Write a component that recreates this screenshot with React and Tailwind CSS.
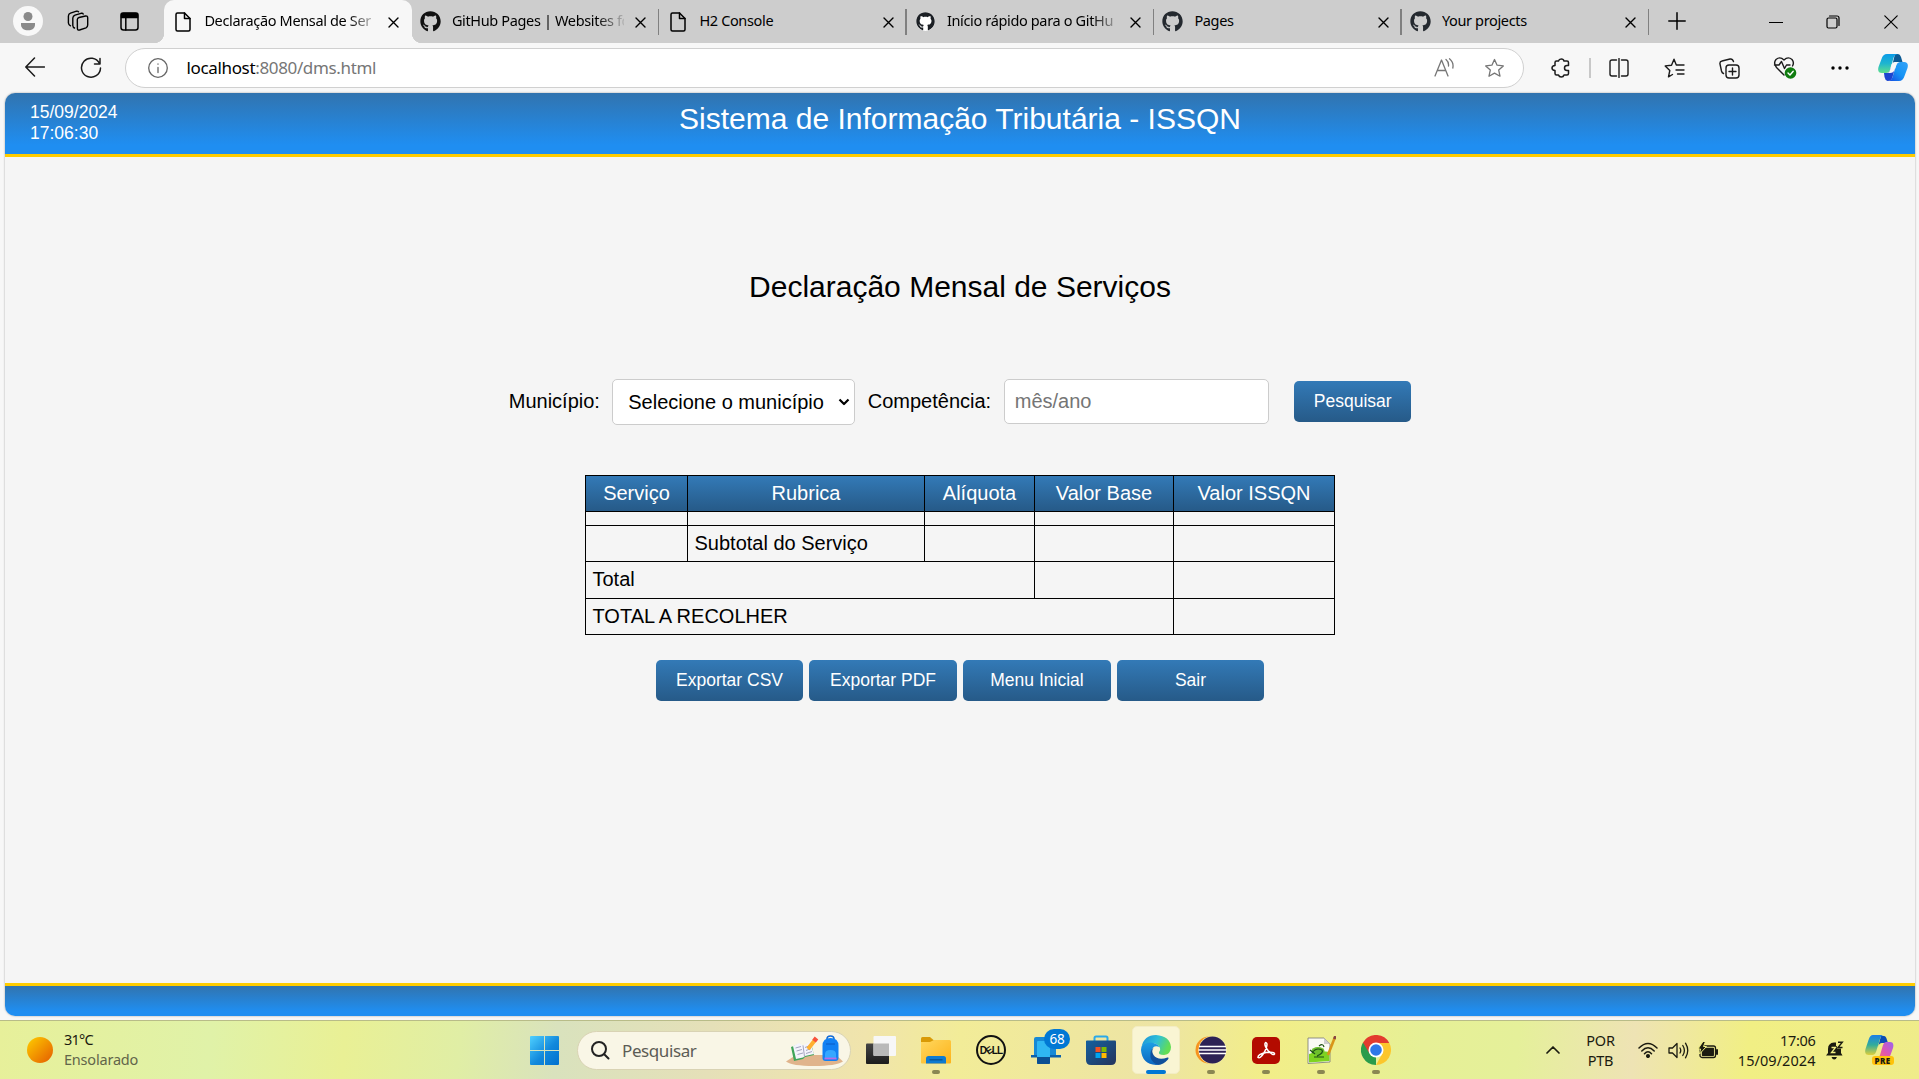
import React from "react";
import { FaGithub } from "react-icons/fa";

const ui = "font-['Noto_Sans','Open_Sans',sans-serif]";

function Svg({ s = 20, w, h, vb, sw = 1.3, className = "", children }) {
  return (
    <svg
      width={w || s}
      height={h || s}
      viewBox={vb || `0 0 ${w || s} ${h || s}`}
      fill="none"
      stroke="currentColor"
      strokeWidth={sw}
      strokeLinecap="round"
      strokeLinejoin="round"
      className={"shrink-0 " + className}
    >
      {children}
    </svg>
  );
}

const DocIcon = () => (
  <Svg w={16} h={20} sw={1.5}>
    <path d="M2.5 1H9.5L15 6.5V17.5Q15 19 13.5 19H2.5Q1 19 1 17.5V2.500Q1 1 2.500 1Z" />
    <path d="M9.500 1V6.500H15" />
  </Svg>
);

const CloseIcon = () => (
  <Svg s={11} sw={1.4}>
    <path d="M1 1L10 10M10 1L1 10" />
  </Svg>
);

function Tab({ icon, title, active, dark = "text-[#24292f]", sep, fade }) {
  return (
    <div
      className={
        "relative flex h-[43px] w-[247.5px] shrink-0 items-center " +
        (active ? "rounded-t-[10px] bg-[#f7f7f7]" : "")
      }
    >
      <div className="ml-2 flex w-[21px] justify-center">
        {icon === "doc" ? (
          <DocIcon />
        ) : icon === "inverse" ? (
          <span className="flex size-[19px] items-center justify-center rounded-full bg-white text-[#1b1f24]">
            <FaGithub size={19} />
          </span>
        ) : (
          <FaGithub size={21} className={dark} />
        )}
      </div>
      <div
        className={
          "ml-[11px] w-[172px] overflow-hidden pb-px text-[14.500px] tracking-[-0.350px] whitespace-nowrap text-black " +
          (fade ? "[mask-image:linear-gradient(to_right,black_84%,transparent_102%)]" : "")
        }
      >
        {title}
      </div>
      <div className="ml-[11.500px] pt-px">
        <CloseIcon />
      </div>
      {sep && <div className="absolute top-[9px] right-0 h-[26px] w-[1.500px] bg-[#808080]" />}
    </div>
  );
}

function TabStrip() {
  return (
    <div className="flex h-[43px] items-center bg-[#cdcdcd] text-black">
      <div className="flex w-14 justify-center pb-0.5">
        <svg width="30" height="30" viewBox="0 0 30 30">
          <circle cx="15" cy="15" r="15" fill="#f8f8f8" />
          <circle cx="15" cy="10.500" r="4.500" fill="#8a8a8a" />
          <path d="M8 17h14v1.500c0 4-3 5.800-7 5.800s-7-1.800-7-5.800z" fill="#8a8a8a" />
        </svg>
      </div>
      <div className="flex w-[44px] justify-center pb-px">
        <Svg s={22} sw={1.4}>
          <path d="M10.300 9.500Q10.500 8 12 7.500L18.500 6Q20.800 5.700 20.700 8V15Q20.700 17 19 17.800L12.500 20Q10.500 20.500 10.400 18.500Z" />
          <path d="M7.500 18Q6 17.500 5.800 15.500V8Q6 6 8 5.200L14 3.300Q15.800 3 16.200 4" />
          <path d="M3.500 15.800Q1.600 15 1.400 13V6Q1.500 4 3.500 3.200L9.500 1.200Q11 1 11.600 1.800" />
        </Svg>
      </div>
      <div className="flex w-[60px] justify-center pb-px">
        <Svg s={19} sw={1.5}>
          <rect x="1" y="1" width="17" height="17" rx="2.500" />
          <path d="M1.500 1.500h16v4h-16z" fill="currentColor" />
          <path d="M5.800 5v13" />
        </Svg>
      </div>
      <div className="relative ml-[5px] flex">
        <div className="absolute bottom-0 -left-[10px] size-[10px] bg-[radial-gradient(circle_at_0_0,transparent_10px,#f7f7f7_10.500px)]" />
        <div className="absolute bottom-0 left-[247.500px] size-[10px] bg-[radial-gradient(circle_at_100%_0,transparent_10px,#f7f7f7_10.500px)]" />
        <Tab icon="doc" title="Declaração Mensal de Ser" active fade />
        <Tab icon="gh" title="GitHub Pages | Websites fo" dark="text-[#111]" sep fade />
        <Tab icon="doc" title="H2 Console" sep />
        <Tab icon="inverse" title="Início rápido para o GitHu" sep fade />
        <Tab icon="gh" title="Pages" sep />
        <Tab icon="gh" title="Your projects" sep />
      </div>
      <div className="flex w-[55px] justify-center pb-px">
        <Svg s={18} sw={1.5}>
          <path d="M9 .8V17.200M.8 9H17.200" />
        </Svg>
      </div>
      <div className="ml-[42.500px] flex w-[58px] justify-center">
        <Svg s={14} sw={1.2}>
          <path d="M.5 7.500H13.500" />
        </Svg>
      </div>
      <div className="flex w-[58px] justify-center">
        <Svg s={14} sw={1.2}>
          <rect x="1" y="3" width="10" height="10" rx="1.500" />
          <path d="M3.500 1H11Q13 1 13 3V10.500" />
        </Svg>
      </div>
      <div className="flex w-[57px] justify-center">
        <Svg s={14} sw={1.2}>
          <path d="M.8.8L13.200 13.200M13.200.8L.8 13.200" />
        </Svg>
      </div>
    </div>
  );
}

const STAR = "M10.500 1.500L13.100 7.200L19.300 7.900L14.700 12.100L16 18.200L10.500 15.100L5 18.200L6.300 12.100L1.700 7.900L7.900 7.200Z";

function ToolCell({ children }) {
  return <div className="flex w-[55px] shrink-0 justify-center">{children}</div>;
}

function Toolbar() {
  return (
    <div className="flex h-[50px] items-center bg-[#f7f7f7] text-[#1b1b1b]">
      <div className="flex w-[70px] justify-center pb-0.5">
        <Svg s={20} sw={1.5}>
          <path d="M19.500 10H1M9.500 1L.8 10L9.500 19" />
        </Svg>
      </div>
      <div className="flex w-[41px] justify-center pb-px">
        <Svg s={22} sw={1.5}>
          <path d="M19.500 6.500A9.500 9.500 0 1 0 20.500 11M20 1.500V7H14.500" />
        </Svg>
      </div>
      <div className="ml-[14px] flex h-10 w-[1399px] items-center rounded-full border border-[#d0d0d0] bg-white">
        <Svg s={20} sw={1.3} className="ml-[21.500px] text-[#666]">
          <circle cx="10" cy="10" r="9.300" />
          <path d="M10 9.500V14.500M10 6V6.200" />
        </Svg>
        <div className="ml-[19px] flex-1 pb-px text-[17px] tracking-[-0.350px] text-[#767676]">
          <span className="text-black">localhost</span>:8080/dms.html
        </div>
        <div className="flex w-[50px] justify-center text-[#767676]">
          <Svg s={20} sw={1.3}>
            <path d="M1 18L7.500 2L14 18M3.300 12.500H11.700M12 1.500Q15 4 14.500 8M15.500.8Q20 4.500 18.800 10" />
          </Svg>
        </div>
        <div className="mr-[4px] flex w-[50px] justify-center text-[#767676]">
          <Svg s={21} sw={1.3}>
            <path d={STAR} />
          </Svg>
        </div>
      </div>
      <div className="ml-[9px] flex items-center">
        <ToolCell>
          <Svg s={20} sw={1.5}>
            <path d="M5.500 3H7.500Q8 1 10.300 1T13 3H16Q17.500 3 17.500 4.500V7.500H16Q13.500 7.500 13.500 10T16 12.500H17.500V15.500Q17.500 17 16 17H13Q12.500 19 10.300 19T7.500 17H5.500Q4 17 4 15.500V12.500Q1 12.300 1 10T4 7.500V4.500Q4 3 5.500 3Z" />
          </Svg>
        </ToolCell>
        <div className="-mr-px ml-px h-5 w-[1.500px] bg-[#c8c8c8]" />
        <div className="flex w-[59px] justify-center">
          <Svg s={20} sw={1.4}>
            <path d="M7.500 2H3Q1 2 1 4V16Q1 18 3 18H7.500M12.500 2H17Q19 2 19 4V16Q19 18 17 18H12.500M10 .5V19.500" />
          </Svg>
        </div>
        <div className="-ml-[1.500px] flex items-center">
          <ToolCell>
            <Svg s={21} sw={1.4}>
              <path d="M8.500 16.500L4.500 18.800L5.800 12.500L1.200 7.900L7.500 7.200L10 1.200L12.300 7H20M12 12H20M13.500 16H20" />
            </Svg>
          </ToolCell>
          <ToolCell>
            <Svg s={21} sw={1.4}>
              <rect x="7" y="7" width="13" height="13" rx="3" />
              <path d="M13.500 10V17M10 13.500H17M4.500 15.500Q3 15 2.500 13L1 6Q.5 3.500 3 3L11 1Q13.500.5 14.500 3.500" />
            </Svg>
          </ToolCell>
          <ToolCell>
            <Svg s={24} sw={1.4}>
              <path d="M11 19L3.500 11.500Q0 7 3 3.500Q7 0 11 4Q15 0 19 3.500Q21.500 6.500 19.500 10M1.500 9H6L8.500 5.500L11.500 12.500L13.500 9H17" />
              <circle cx="17.500" cy="17" r="5.800" fill="#107c10" stroke="none" />
              <path d="M15 17L17 19L20.200 15.200" stroke="#fff" />
            </Svg>
          </ToolCell>
          <ToolCell>
            <svg width="18" height="4" viewBox="0 0 18 4">
              <circle cx="2" cy="2" r="1.700" />
              <circle cx="9" cy="2" r="1.700" />
              <circle cx="16" cy="2" r="1.700" />
            </svg>
          </ToolCell>
          <div className="flex w-[51px] justify-center">
            <Copilot size={30} />
          </div>
        </div>
      </div>
    </div>
  );
}

function Copilot({ size }) {
  return (
    <svg width={size} height={size} viewBox="0 0 30 30" className="shrink-0">
      <defs>
        <linearGradient id="cpA" x1="0" y1="0" x2="0" y2="1">
          <stop offset="0" stopColor="#0a9be8" />
          <stop offset=".5" stopColor="#1fb5cf" />
          <stop offset="1" stopColor="#5fe08c" />
        </linearGradient>
        <linearGradient id="cpB" x1="0" y1="1" x2="1" y2="0">
          <stop offset="0" stopColor="#1546e0" />
          <stop offset=".5" stopColor="#1694f5" />
          <stop offset="1" stopColor="#34a3f8" />
        </linearGradient>
      </defs>
      <path d="M17 1H20Q22 1 23 4L24.500 9H18Q15 9 14 12L13 17Z" fill="#0c5a94" />
      <path d="M21 1H9Q5 1 3.500 6L.5 14Q-1 20 4 20H8Q11 20 12 17L15.500 5Q16.500 1 21 1Z" fill="url(#cpA)" />
      <path d="M9 28H21Q25 28 26.500 23L29.500 15Q31 9 26 9H22Q19 9 18 13L14.500 24Q13.500 28 9 28Z" fill="url(#cpB)" />
      <path d="M6 20H9Q11.500 20 12 17L13 14L17 15L14.500 24Q13.500 28 9.500 28Q7 27 6.500 24Z" fill="#1c45d0" />
      <path d="M13 13Q14 9 17.500 9H22Q19 9 18 13L16.500 17Q15.500 20 12 20H9Q11.500 20 12 17Z" fill="#f7f7f7" />
    </svg>
  );
}

function BlueButton({ children, className }) {
  return (
    <button
      className={
        "h-[41px] rounded-[5px] bg-linear-to-b from-[#337ab7] to-[#265a88] pb-px text-[17.500px] text-white " +
        className
      }
    >
      {children}
    </button>
  );
}

const th = "flex items-center justify-center bg-linear-to-b from-[#337ab7] to-[#265a88] pb-0.5 text-white";
const td = "flex items-center bg-[#f5f5f5] pb-0.5 pl-[6.500px]";

function Page() {
  return (
    <div className="h-[927px] bg-[#f7f7f7] pr-[4px] pl-[5px] font-['Liberation_Sans',Arial,sans-serif] text-[20px] text-black">
      <div className="flex h-[923px] flex-col overflow-hidden rounded-[10px] bg-[#f5f5f5] shadow-[0_0_2px_#999]">
        <header className="flex h-[64px] shrink-0 border-b-[3px] border-[#fc0] bg-[linear-gradient(to_bottom,#3174af,#1f8ef1_85%)] text-white">
          <div className="w-[400px] pt-[9px] pl-[25px] text-[17.500px] leading-[21px]">
            <div>15/09/2024</div>
            <div>17:06:30</div>
          </div>
          <h1 className="flex-1 pt-[8px] text-center text-[30px] leading-[35px]">
            Sistema de Informação Tributária - ISSQN
          </h1>
          <div className="w-[400px]" />
        </header>
        <main className="flex flex-1 flex-col items-center">
          <h2 className="mt-[112px] text-[30px] leading-[36px]">Declaração Mensal de Serviços</h2>
          <div className="mt-[74px] flex h-[46px] items-start">
            <label className="mt-[11px] w-[103.500px] leading-[23px]">Município:</label>
            <div className="flex h-[46px] w-[243px] items-center rounded-[5px] border border-[#ccc] bg-white pl-[15px] whitespace-nowrap">
              Selecione o município
              <Svg w={12} h={8} sw={2.200} className="ml-[14px]">
                <path d="M1.500 1.500L6 6L10.500 1.500" strokeLinecap="butt" />
              </Svg>
            </div>
            <label className="mt-[11px] ml-[12.500px] w-[136.500px] leading-[23px]">Competência:</label>
            <input
              className="h-[45px] w-[265px] rounded-[5px] border border-[#ccc] bg-white pl-[9.500px] placeholder:text-[#757575]"
              placeholder="mês/ano"
            />
            <BlueButton className="mt-0.5 ml-[25px] w-[117px]">Pesquisar</BlueButton>
          </div>
          <div className="mt-[50px] grid grid-cols-[101px_236px_109px_138px_160px] grid-rows-[35px_13px_35px_36px_35px] gap-px border border-black bg-black">
            <div className={th}>Serviço</div>
            <div className={th}>Rubrica</div>
            <div className={th}>Alíquota</div>
            <div className={th}>Valor Base</div>
            <div className={th}>Valor ISSQN</div>
            <div className={td} />
            <div className={td} />
            <div className={td} />
            <div className={td} />
            <div className={td} />
            <div className={td} />
            <div className={td}>Subtotal do Serviço</div>
            <div className={td} />
            <div className={td} />
            <div className={td} />
            <div className={td + " col-span-3"}>Total</div>
            <div className={td} />
            <div className={td} />
            <div className={td + " col-span-4"}>TOTAL A RECOLHER</div>
            <div className={td} />
          </div>
          <div className="mt-[25px] flex gap-[6px]">
            <BlueButton className="w-[147px]">Exportar CSV</BlueButton>
            <BlueButton className="w-[148px]">Exportar PDF</BlueButton>
            <BlueButton className="w-[148px]">Menu Inicial</BlueButton>
            <BlueButton className="w-[147px]">Sair</BlueButton>
          </div>
        </main>
        <footer className="h-[33px] shrink-0 border-t-[3px] border-[#fc0] bg-[linear-gradient(to_bottom,#3174af,#1f8ef1_85%)]" />
      </div>
    </div>
  );
}

function TaskApp({ children, dot, active }) {
  return (
    <div className="flex h-[58px] w-[55px] shrink-0 items-center justify-center">
      <div
        className={
          "relative flex size-12 items-center justify-center rounded-[5px] " +
          (active ? "border border-[#f3edc4] bg-[#f9f5d3]" : "")
        }
      >
        {children}
        {dot && <div className="absolute bottom-0 left-5 h-1 w-2 rounded-full bg-[#8a8752]" />}
        {active && <div className="absolute -bottom-px left-[13px] h-1 w-5 rounded-full bg-[#0078d4]" />}
      </div>
    </div>
  );
}

function TaskApps() {
  return (
    <div className="flex">
      <TaskApp>
        <svg width="30" height="28" viewBox="0 0 30 28">
          <defs>
            <linearGradient id="tv" x1="0" y1="0" x2="0" y2="1">
              <stop offset="0" stopColor="#444" />
              <stop offset="1" stopColor="#1c1c1c" />
            </linearGradient>
          </defs>
          <rect y="7.500" width="23" height="20.500" rx="1" fill="url(#tv)" />
          <rect x="7.500" width="22.500" height="20" rx="1" fill="#f7f7f7" />
          <path d="M7.500 7.500H23V20H8.500Q7.500 20 7.500 19Z" fill="#b9b9b9" />
        </svg>
      </TaskApp>
      <TaskApp dot>
        <svg width="30" height="27" viewBox="0 0 30 27">
          <defs>
            <linearGradient id="fo" x1="0" y1="0" x2="1" y2="1">
              <stop offset="0" stopColor="#ffd75e" />
              <stop offset="1" stopColor="#fdb31a" />
            </linearGradient>
          </defs>
          <path d="M0 1.500Q0 0 1.500 0H9L13 3.500V8H0Z" fill="#d99a06" />
          <path d="M0 5H9L13 3H28.500Q30 3 30 4.500V25.500Q30 26.500 29 26.500H1Q0 26.500 0 25.500Z" fill="url(#fo)" />
          <path d="M5 26.500V21.500Q5 19 7.500 19H22.500Q25 19 25 21.500V26.500Z" fill="#0f7bd0" />
          <path d="M8.500 22.800H21.500" stroke="#07508f" strokeWidth="1.200" />
        </svg>
      </TaskApp>
      <TaskApp>
        <div className="flex size-[30px] items-center justify-center rounded-full border-2 border-[#111] font-['Liberation_Sans',sans-serif] text-[10px] font-black tracking-[-0.900px] text-[#111]">
          D<span className="inline-block -rotate-[35deg]">E</span>LL
        </div>
      </TaskApp>
      <TaskApp>
        <svg width="30" height="30" viewBox="0 0 30 30">
          <path d="M3 4Q3 2 5 2H25V22H3Z" fill="#1689d6" />
          <path d="M0 20H30V22.500H0Z" fill="#0a60ac" />
          <rect x="6" y="6" width="13" height="23" rx="1" fill="#2fb6f2" />
          <path d="M6 22H19V28Q19 29 18 29H7Q6 29 6 28Z" fill="#0b4f93" />
        </svg>
        <div className="absolute top-[3px] left-[22px] flex h-5 w-[26px] items-center justify-center rounded-full bg-[#0078d4] text-[13.500px] tracking-[-0.300px] text-white">
          68
        </div>
      </TaskApp>
      <TaskApp>
        <svg width="30" height="30" viewBox="0 0 30 30">
          <defs>
            <linearGradient id="st" x1="0" y1="0" x2="1" y2="1">
              <stop offset="0" stopColor="#14609f" />
              <stop offset="1" stopColor="#25345c" />
            </linearGradient>
          </defs>
          <path d="M8.500 6V3Q8.500 1.500 10 1.500H20Q21.500 1.500 21.500 3V6" stroke="#2aa9ea" strokeWidth="2" fill="none" />
          <path d="M0 6Q0 5.500 1 5.500H29Q30 5.500 30 6.500V25Q30 30 25 30H5Q0 30 0 25Z" fill="url(#st)" />
          <path d="M9.500 12H14.500V17H9.500Z" fill="#f25022" />
          <path d="M15.500 12H20.500V17H15.500Z" fill="#7fba00" />
          <path d="M9.500 18H14.500V23H9.500Z" fill="#00a4ef" />
          <path d="M15.500 18H20.500V23H15.500Z" fill="#ffb900" />
        </svg>
      </TaskApp>
      <TaskApp active>
        <svg width="30" height="30" viewBox="0 0 30 30">
          <defs>
            <linearGradient id="e1" x1="0" y1="0" x2="1" y2=".35">
              <stop offset="0" stopColor="#1a8fd8" />
              <stop offset=".55" stopColor="#2fc0d8" />
              <stop offset="1" stopColor="#62dd55" />
            </linearGradient>
            <linearGradient id="e2" x1="0" y1="0" x2="0" y2="1">
              <stop offset="0" stopColor="#1c9ee4" />
              <stop offset="1" stopColor="#0c66c0" />
            </linearGradient>
          </defs>
          <path d="M.5 12Q3 0 15 0Q29 1 30 12Q30 19 23 20Q17 20 18 17Q20 15 18.500 12Q16 8 10 8Q3 8 .5 12Z" fill="url(#e1)" />
          <path d="M0 15Q0 8 8 7.500Q16 7.500 18.500 12Q12 9.500 10.500 16Q10 25 20 29Q18 30 15 30Q1 29 0 15Z" fill="url(#e2)" />
          <path d="M12.500 13Q10 16 12.500 20Q17 26 26.500 22.500Q28.500 22 27 24.500Q22 30 17 29.800Q8 27 9.500 18Q10 14 12.500 13Z" fill="#10509c" />
        </svg>
      </TaskApp>
      <TaskApp dot>
        <svg width="32" height="28" viewBox="0 0 32 28">
          <circle cx="14" cy="14" r="13.500" fill="#f7941e" />
          <circle cx="17.500" cy="14" r="14" fill="#f5eea5" />
          <circle cx="17.500" cy="14" r="13.500" fill="#2c2255" />
          <path d="M4 10.500H31M3.500 14H31.500M4 17.500H31" stroke="#fff" strokeWidth="1.500" />
        </svg>
      </TaskApp>
      <TaskApp dot>
        <svg width="28" height="27" viewBox="0 0 28 27">
          <rect width="28" height="27" rx="5" fill="#b30b00" />
          <path
            d="M6 20.500Q5.500 17.500 14 15.500Q23 14.500 22.500 17Q21 19 16 13.500Q12.500 9 13 6.500Q14 4.500 15 7Q15 11 11.500 16.500Q8 22 6 20.500Z"
            fill="none"
            stroke="#fff"
            strokeWidth="1.500"
          />
        </svg>
      </TaskApp>
      <TaskApp dot>
        <svg width="30" height="28" viewBox="0 0 30 28">
          <path d="M2 2H18L24 8V26L2 27.500Z" fill="#fbfbf4" stroke="#777" strokeWidth=".8" />
          <path d="M18 2V8H24Z" fill="#ccc" />
          <path d="M3 18Q12 14 23.500 16V25L3 26.500Z" fill="#7ed321" />
          <ellipse cx="12" cy="15" rx="6.500" ry="4" fill="#6cbf2c" />
          <path d="M6 17Q10 11 16 14Q18 17 11 20M13 10Q17 7 18 11M4 14L9 18M8 21H18" stroke="#1e5016" strokeWidth="1.200" fill="none" />
          <path d="M29 1L22 19" stroke="#d99518" strokeWidth="2.600" />
          <path d="M29.500 0L28.300 3" stroke="#844" strokeWidth="2.600" />
        </svg>
      </TaskApp>
      <TaskApp dot>
        <svg width="30" height="30" viewBox="0 0 30 30">
          <path d="M15 15L15 30A15 15 0 0 1 2 7.500Z" fill="#2a9c4b" />
          <path d="M15 8H28.300A15 15 0 0 1 15 30L21.500 18.500Z" fill="#fcc62b" />
          <path d="M2 7.500L8.500 18.500L15 8H28.300A15 15 0 0 0 2 7.500Z" fill="#e33b2e" />
          <circle cx="15" cy="15" r="7.500" fill="#fff" />
          <circle cx="15" cy="15" r="5.800" fill="#2f78e8" />
        </svg>
      </TaskApp>
    </div>
  );
}

function SearchBox() {
  return (
    <div className="flex h-[39px] w-[274px] items-center rounded-full border border-[#d9d3b4] bg-[#f9f6e6] pl-[13px] text-[#5c5c55]">
      <Svg s={19} sw={2} className="text-[#222]">
        <circle cx="8" cy="8" r="7" />
        <path d="M13.200 13.200L17.500 17.500" />
      </Svg>
      <div className="ml-[12.500px] w-[163.500px] pt-px text-[17px] tracking-[-0.400px]">Pesquisar</div>
      <svg width="58" height="32" viewBox="0 0 58 32" className="mt-0.5">
        <path d="M0 26.500L10 20H50L57 26.500Q50 31 28 31Q6 31 0 26.500Z" fill="#e0b48c" />
        <path d="M5 12L13 9L17 11L25 8L28 20L19 22L17 24L8 26Z" fill="#3fa55a" />
        <path d="M7 11L13 8L17 10.500L24 7L28 19L19 21L17 22.500L10 24Z" fill="#f4f4fc" />
        <path d="M17 10.500L18.500 21.500M9.500 13L15 11.500M10.500 16L16 14.500M11.500 19.500L17 18M19 12.500L24 10.500M20 15.500L25 13.500M20 18.500L26 16.500" stroke="#a4a4c0" />
        <path d="M29 5L22 14" stroke="#ffb02e" strokeWidth="4" />
        <path d="M30.500 3L28 6.200" stroke="#f8523b" strokeWidth="4.500" />
        <path d="M41 4Q41 1 44.500 1T48 4" stroke="#1169d6" strokeWidth="1.600" fill="none" />
        <path d="M36.500 11Q36.500 3 44.500 3T52.500 11V23Q52.500 26 49.500 26H39.500Q36.500 26 36.500 23Z" fill="#1281f3" />
        <path d="M39 19Q39 15 44.500 15T50 19V23H39Z" fill="#35a7ff" />
        <path d="M38.500 23.500H50.500" stroke="#b96be8" strokeWidth="1.800" />
        <path d="M40 9H49" stroke="#0a5bc4" />
      </svg>
    </div>
  );
}

function Taskbar() {
  return (
    <div
      className={
        "flex h-[59px] items-center border-t border-[#b8bc88] bg-[linear-gradient(95deg,#e7f09a_0%,#e0f2a8_11%,#e9f095_18%,#e0eea5_24%,#d9e2bd_29%,#e5e0b8_37%,#f0e4ac_45%,#f2ec98_50%,#ede4a4_60%,#f2ee88_66%,#e6f096_74%,#e5f09a_79%,#eee3b4_85%,#f1ef84_91%,#efec8a_100%)] " +
        ui
      }
    >
      <div className="flex w-[530px] items-center">
        <svg width="26" height="26" viewBox="0 0 26 26" className="ml-[27px]">
          <defs>
            <linearGradient id="sun" x1="0" y1="0" x2="1" y2="1">
              <stop offset="0" stopColor="#ffce00" />
              <stop offset="1" stopColor="#e45b00" />
            </linearGradient>
          </defs>
          <circle cx="13" cy="13" r="13" fill="url(#sun)" />
        </svg>
        <div className="ml-[11px] pb-0.5 text-[14.500px] leading-5 tracking-[-0.200px]">
          <div className="tracking-[-0.800px] text-[#1b1b10]">31°C</div>
          <div className="text-[#62654a]">Ensolarado</div>
        </div>
      </div>
      <svg width="29" height="29" viewBox="0 0 29 29">
        <defs>
          <linearGradient id="win" gradientUnits="userSpaceOnUse" x1="0" y1="0" x2="29" y2="29">
            <stop offset="0" stopColor="#4fd0ff" />
            <stop offset=".55" stopColor="#1289dc" />
            <stop offset="1" stopColor="#0070cf" />
          </linearGradient>
        </defs>
        <path d="M0 1Q0 0 1 0H14V14H0ZM15 0H28Q29 0 29 1V14H15ZM0 15H14V29H1Q0 29 0 28ZM15 15H29V28Q29 29 28 29H15Z" fill="url(#win)" />
      </svg>
      <div className="ml-[17.500px]">
        <SearchBox />
      </div>
      <div className="ml-[3px]">
        <TaskApps />
      </div>
      <div className="ml-[142px] flex items-center text-[#1b1b10]">
        <Svg w={14} h={8} sw={1.7}>
          <path d="M1 7L7 1L13 7" />
        </Svg>
        <div className="ml-[20px] w-[42px] text-center text-[14.500px] leading-5 tracking-[-0.200px]">
          <div>POR</div>
          <div>PTB</div>
        </div>
        <Svg w={20} h={16} sw={1.5} className="ml-[16px]">
          <path d="M1 6Q10-3 19 6M3.800 9Q10 2.500 16.200 9M6.500 11.700Q10 8 13.500 11.700" />
          <circle cx="10" cy="14" r="1.300" fill="currentColor" />
        </Svg>
        <Svg w={21} h={17} sw={1.3} className="ml-[10px]">
          <path d="M1 6H4.500L9 1.500V15.500L4.500 11H1ZM12 6Q13.500 8.500 12 11M14.800 3.500Q18 8.500 14.800 13.500M17.500 1.200Q22 8.500 17.500 15.800" />
        </Svg>
        <Svg w={21} h={17} sw={1.3} className="ml-[9px]">
          <rect x="2" y="4" width="15.500" height="11.500" rx="2" />
          <rect x="4.500" y="6.300" width="10.800" height="7" fill="currentColor" />
          <path d="M19 8V12" strokeWidth="2" />
          <path d="M5-.5L0 7H2.500L1.500 12L8.500 4.500H5.500L7.500-.5Z" fill="currentColor" stroke="#f1ef84" strokeWidth="1" />
        </Svg>
        <div className="ml-[17px] flex w-[80px] flex-col items-end text-[14.500px] leading-5 whitespace-nowrap">
          <div className="tracking-[-0.300px]">17:06</div>
          <div className="tracking-[0.050px]">15/09/2024</div>
        </div>
        <svg width="18" height="19" viewBox="0 0 18 19" className="ml-[10px]">
          <path d="M2 8Q2 2 8 1.500H10V5H15V12L16.500 14.500H0L2 12Z" fill="#1b1b10" />
          <path d="M5.500 16H11Q10 18.500 8.200 18.500T5.500 16Z" fill="#1b1b10" />
          <path d="M5.500 6.500H9.500L5.500 11.500H9.500" stroke="#f1ef84" strokeWidth="1.300" fill="none" />
          <path d="M11 0H18V7.500H11Z" fill="#efed88" />
          <path d="M12 1.200H16.300L12 6.500H16.500" stroke="#1b1b10" strokeWidth="1.400" fill="none" />
          <path d="M12 8.500H15V12.500H12Z" fill="#1b1b10" />
        </svg>
        <div className="relative ml-[21px] h-[30px] w-[30px]">
          <svg width="29" height="26" viewBox="0 0 29 26">
            <defs>
              <linearGradient id="ca" x1="0" y1="0" x2="0" y2="1">
                <stop offset="0" stopColor="#1c7fe8" />
                <stop offset=".5" stopColor="#32ad9a" />
                <stop offset="1" stopColor="#dfcf3a" />
              </linearGradient>
              <linearGradient id="cb" x1="1" y1="0" x2="0" y2="1">
                <stop offset="0" stopColor="#9b62f0" />
                <stop offset=".5" stopColor="#df55b0" />
                <stop offset="1" stopColor="#ff7a55" />
              </linearGradient>
            </defs>
            <path d="M16 1H19Q21 1 22 5L23 8H17Q14 8 13 12Z" fill="#0a4db5" />
            <path d="M19 0H8Q5 0 3.500 5L.5 14Q-1 20 4 20H8Q10 20 11 17L15 4Q16 0 19 0Z" fill="url(#ca)" />
            <path d="M10 25H20Q24 25 25.500 20L28 13Q29.500 7 25 7H21Q19 7 18 10L15 20Q13 25 10 25Z" fill="url(#cb)" />
          </svg>
          <div className="absolute bottom-0 left-[7px] flex h-[9px] w-[22px] items-center justify-center rounded-[3px] bg-[#ffc20a] text-[8px] font-black tracking-[0.300px] text-[#1b1b10]">
            PRE
          </div>
        </div>
      </div>
    </div>
  );
}

export default function App() {
  return (
    <div className="h-[1079px] w-[1919px] overflow-hidden bg-[#f7f7f7]">
      <div className={ui}>
        <TabStrip />
        <Toolbar />
      </div>
      <Page />
      <Taskbar />
    </div>
  );
}
